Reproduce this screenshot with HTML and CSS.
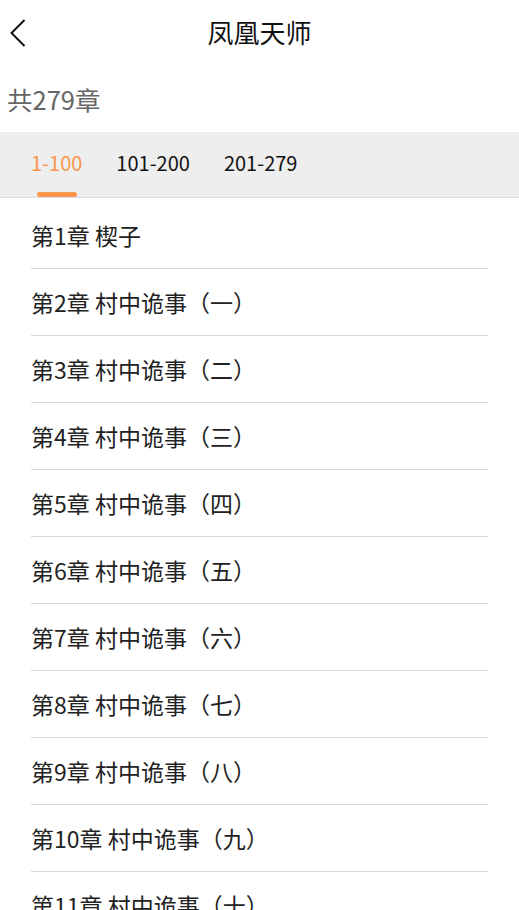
FILE: index.html
```html
<!DOCTYPE html>
<html>
<head>
<meta charset="UTF-8">
<title>凤凰天师</title>
<link rel="stylesheet" href="styles.css">
</head>
<body>

<div class="header">
  <a class="back" href="#">
    <svg width="30" height="64" viewBox="0 0 30 64">
      <polyline points="24.5,20 11.5,33 24.5,46" fill="none" stroke="#111" stroke-width="2"/>
    </svg>
  </a>
  <h1 class="title">凤凰天师</h1>
  <span></span>
</div>

<div class="total">共279章</div>

<div class="tabs">
  <div class="tab active">1-100</div>
  <div class="tab">101-200</div>
  <div class="tab">201-279</div>
</div>

<ul class="chapters">
  <li>第1章 楔子</li>
  <li>第2章 村中诡事（一）</li>
  <li>第3章 村中诡事（二）</li>
  <li>第4章 村中诡事（三）</li>
  <li>第5章 村中诡事（四）</li>
  <li>第6章 村中诡事（五）</li>
  <li>第7章 村中诡事（六）</li>
  <li>第8章 村中诡事（七）</li>
  <li>第9章 村中诡事（八）</li>
  <li>第10章 村中诡事（九）</li>
  <li>第11章 村中诡事（十）</li>
  <li>第12章 村中诡事（十一）</li>
</ul>

</body>
</html>
```

FILE: styles.css
```css
body {
  margin: 0;
  font-family: "Noto Sans CJK SC", "Noto Sans", sans-serif;
  color: #222;
  background: #fff;
  overflow: hidden;
}
.header {
  display: grid;
  grid-template-columns: 1fr auto 1fr;
  align-items: center;
  height: 64px;
}
.back {
  display: block;
  width: 30px;
  height: 64px;
}
.back svg {
  display: block;
}
.title {
  margin: 0;
  font-size: 26px;
  font-weight: normal;
  color: #111;
  line-height: 64px;
}
.total {
  height: 68px;
  line-height: 70px;
  padding-left: 7px;
  font-size: 25.5px;
  color: #666;
}
.tabs {
  display: flex;
  padding-left: 14px;
  background-color: #eeeeee;
  border-bottom: 1px solid #dcdde2;
  height: 65px;
}
.tab {
  display: flex;
  flex-direction: column;
  align-items: center;
  padding: 17px 17px 0;
  font-size: 20px;
  line-height: 28px;
  color: #111;
}
.tab::after {
  content: "";
  display: block;
  width: 40px;
  height: 5px;
  margin-top: 15px;
  border-radius: 3px;
  background: transparent;
}
.tab.active {
  color: #f9964b;
}
.tab.active::after {
  background: #f9964b;
}
.chapters {
  list-style: none;
  margin: 0;
  padding: 4px 31px 0;
}
.chapters li {
  height: 66px;
  line-height: 66px;
  font-size: 23px;
  color: #222;
  border-bottom: 1px solid #d8d8d8;
}
```
